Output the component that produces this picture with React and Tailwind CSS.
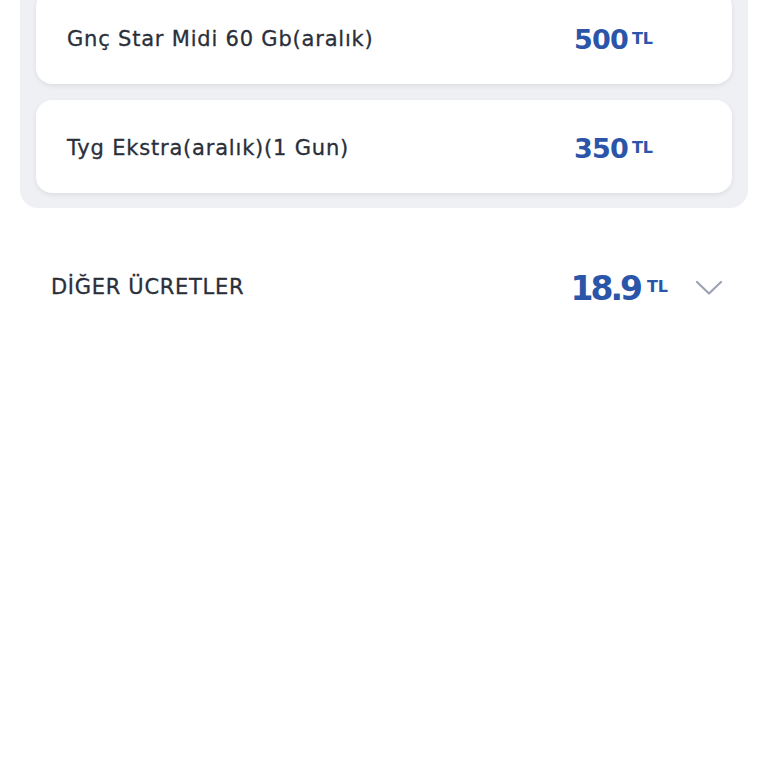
const items = [
  { name: 'Gnç Star Midi 60 Gb(aralık)', price: '500' },
  { name: 'Tyg Ekstra(aralık)(1 Gun)', price: '350' },
]

function Price({ value, big }) {
  return (
    <div className={`flex items-start gap-[4px] text-[#2b55a8] font-bold leading-none ${big ? 'mt-[2px]' : 'mt-[4px]'}`}>
      <span className={big ? 'text-[33px] tracking-[-3px]' : 'text-[27px] tracking-[-0.8px]'}>{value}</span>
      <span className={big ? 'text-[16px] mt-[7px] ml-[3px]' : 'text-[16px] mt-[5px]'}>TL</span>
    </div>
  )
}

function Chevron() {
  return (
    <svg className="ml-[27px] mt-[2px]" width="28" height="16" viewBox="0 0 28 16" fill="none">
      <path d="M2 2 L14 13.5 L26 2" stroke="#9ba3b4" strokeWidth="2.2" strokeLinecap="round" strokeLinejoin="round" />
    </svg>
  )
}

export default function App() {
  return (
    <div className="min-h-[768px] bg-white overflow-hidden" style={{ fontFamily: '"DejaVu Sans", Lato, sans-serif' }}>
      <div className="mx-5 -mt-[25px] px-4 pt-4 pb-[15px] rounded-b-[18px] bg-[#eef0f3] flex flex-col gap-4">
        {items.map(it => (
          <div key={it.name} className="h-[93px] bg-white rounded-2xl shadow-[0_2px_5px_rgba(0,0,0,0.08)] flex items-center pl-[31px] pr-[79px]">
            <span className="flex-1 text-[21px] tracking-[0.8px] text-[#2a2f3a] [-webkit-text-stroke:0.3px_#2a2f3a] pt-[5px]">{it.name}</span>
            <Price value={it.price} />
          </div>
        ))}
      </div>

      <div className="mx-5 mt-[49px] h-[60px] flex items-center pl-[31px] pr-[25px]">
        <span className="flex-1 text-[21px] tracking-[0.7px] text-[#2a2f3a] [-webkit-text-stroke:0.3px_#2a2f3a] pt-[2px]">DİĞER ÜCRETLER</span>
        <Price value="18.9" big />
        <Chevron />
      </div>
    </div>
  )
}
